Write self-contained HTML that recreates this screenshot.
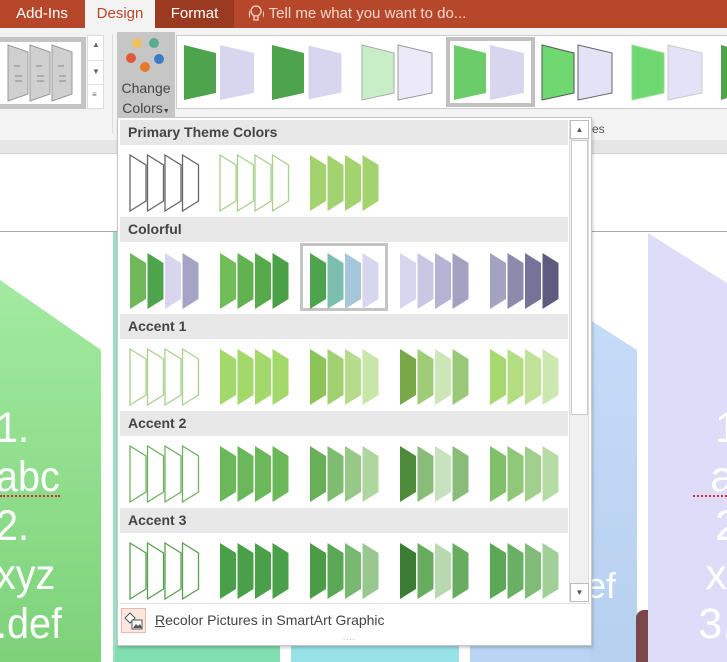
<!DOCTYPE html>
<html><head><meta charset="utf-8"><style>
*{margin:0;padding:0;box-sizing:border-box}
body{width:727px;height:662px;overflow:hidden;position:relative;background:#fff;font-family:"Liberation Sans",sans-serif}
.abs{position:absolute}
.tab{position:absolute;top:0;height:28px;line-height:28px;font-size:15px;color:#fff;text-align:center}
.hdr{position:absolute;left:120px;width:448px;height:25px;background:#e8e8e8;font-weight:bold;font-size:14px;color:#444;line-height:25px;padding-left:8px}
.big{position:absolute;color:#fff;font-size:43px;line-height:49px}
</style></head><body>
<!-- tab bar -->
<div class="abs" style="left:0;top:0;width:727px;height:28px;background:#b7472a"></div>
<div class="tab" style="left:0;width:84px">Add-Ins</div>
<div class="tab" style="left:85px;width:70px;background:#f3f3f3;color:#b7472a">Design</div>
<div class="tab" style="left:155px;width:79px;background:#9a3a20">Format</div>
<div class="tab" style="left:248px;width:240px;text-align:left;color:#f4d8cc">&#9711;&#xFE0E; Tell me what you want to do...</div>
<div class="abs" style="left:250px;top:6px;width:13px;height:16px;background:#b7472a"></div>
<svg class="abs" style="left:249px;top:5px" width="14" height="18"><circle cx="7" cy="6" r="5" fill="none" stroke="#f4d8cc" stroke-width="1.3"/><path d="M5 11v4h4v-4" fill="none" stroke="#f4d8cc" stroke-width="1.3"/></svg>
<!-- ribbon -->
<div class="abs" style="left:0;top:28px;width:727px;height:112px;background:#f3f3f3"></div>
<div class="abs" style="left:0;top:140px;width:727px;height:14px;background:#e6e6e6;border-bottom:1px solid #d0d0d0"></div>
<div class="abs" style="left:0;top:231px;width:727px;height:1px;background:#a8a8a8"></div>
<!-- left gallery -->
<div class="abs" style="left:0;top:37px;width:86px;height:72px;background:#c4c4c4"></div>
<div class="abs" style="left:0;top:42px;width:81px;height:62px;background:#fff"></div>
<svg class="abs" style="left:0;top:42px" width="82" height="62">
<g fill="#d0d0d0" stroke="#999">
<polygon points="8,3 28,10 28,52 8,59"/><polygon points="30,3 50,10 50,52 30,59"/><polygon points="52,3 72,10 72,52 52,59"/></g>
<g stroke="#888" stroke-width="1"><path d="M14 24h6M36 24h6M58 24h6M15 34h7M37 34h7M59 34h7M15 39h7M37 39h7M59 39h7"/></g></svg>
<div class="abs" style="left:87px;top:35px;width:17px;height:74px;background:#fff;border:1px solid #ddd"></div>
<div class="abs" style="left:87px;top:60px;width:17px;height:1px;background:#ddd"></div>
<div class="abs" style="left:87px;top:84px;width:17px;height:1px;background:#ddd"></div>
<div class="abs" style="left:92px;top:40px;font-size:8px;color:#666">&#9650;</div>
<div class="abs" style="left:92px;top:67px;font-size:8px;color:#666">&#9660;</div>
<div class="abs" style="left:92px;top:90px;font-size:8px;color:#666">&#8801;</div>
<div class="abs" style="left:112px;top:34px;width:1px;height:100px;background:#ddd"></div>
<!-- change colors -->
<div class="abs" style="left:117px;top:32px;width:58px;height:85px;background:#c6c6c6"></div>
<svg class="abs" style="left:117px;top:32px" width="58" height="50"><circle cx="20" cy="11" r="5" fill="#f0c060"/><circle cx="37" cy="11" r="5" fill="#5aab8e"/><circle cx="14" cy="26" r="5" fill="#e05a3a"/><circle cx="42" cy="27" r="5" fill="#3d7ac8"/><circle cx="28" cy="35" r="5" fill="#e87a2a"/></svg>
<div class="abs" style="left:117px;top:78px;width:58px;text-align:center;font-size:14px;color:#444;line-height:20px">Change<br>Colors<span style="font-size:7px">&#9660;</span></div>
<!-- right gallery -->
<div class="abs" style="left:176px;top:35px;width:560px;height:74px;background:#fff;border:1px solid #ccc"></div>
<div class="abs" style="left:446px;top:37px;width:89px;height:70px;background:#c0c0c0"></div>
<div class="abs" style="left:450px;top:41px;width:81px;height:62px;background:#fff"></div>
<svg class="abs" style="left:176px;top:35px" width="551" height="74">
<polygon points="8,10 40,18 40,58 8,65" fill="#4ea44c"/><polygon points="44,10 78,18 78,58 44,65" fill="#d8d6ee"/>
<polygon points="96,10 128,18 128,58 96,65" fill="#4ea44c"/><polygon points="132,10 166,18 166,58 132,65" fill="#d8d6ee" stroke="#fff"/>
<polygon points="186,10 218,18 218,58 186,65" fill="#c8eec8" stroke="#aaa"/><polygon points="222,10 256,18 256,58 222,65" fill="#eceaf8" stroke="#999"/>
<polygon points="278,10 310,18 310,58 278,65" fill="#6ccc6a"/><polygon points="314,10 348,18 348,58 314,65" fill="#d8d6ee"/>
<polygon points="366,10 398,18 398,58 366,65" fill="#70d870" stroke="#555"/><polygon points="402,10 436,18 436,58 402,65" fill="#e4e2f6" stroke="#666"/>
<polygon points="456,10 488,18 488,58 456,65" fill="#70d870" stroke="#9d9"/><polygon points="492,10 526,18 526,58 492,65" fill="#e4e2f6" stroke="#ccc"/>
<polygon points="545,10 560,14 560,60 545,65" fill="#4ea44c"/></svg>
<div class="abs" style="left:592px;top:122px;font-size:12px;color:#555">es</div>
<!-- slide background shapes -->
<div class="abs" style="left:0;top:280px;width:101px;height:382px;background:linear-gradient(#a2eaa0,#7ed27a);clip-path:polygon(0 0,100% 70px,100% 100%,0 100%)"></div>
<div class="big" style="left:-4px;top:404px;width:110px;transform:scaleX(0.92);transform-origin:0 0">1.<br>abc<br>2.<br>xyz<br>.def</div>
<div class="abs" style="left:0;top:495px;width:60px;height:2px;border-bottom:2px dotted #c33"></div>
<div class="abs" style="left:113px;top:232px;width:5px;height:430px;background:#9ee0c6"></div>
<div class="abs" style="left:115px;top:645px;width:165px;height:17px;background:#80deb0"></div>
<div class="abs" style="left:291px;top:645px;width:168px;height:17px;background:#96e2e6"></div>
<div class="abs" style="left:470px;top:645px;width:125px;height:17px;background:#bcd4f4"></div>
<div class="abs" style="left:590px;top:320px;width:47px;height:342px;background:linear-gradient(#c4dcf8,#b8d0f0);clip-path:polygon(0 0,100% 30px,100% 100%,0 100%)"></div>
<div class="abs" style="left:586px;top:565px;color:#fff;font-size:36px">ef</div>
<div class="abs" style="left:636px;top:610px;width:12px;height:52px;background:#7a4848;border-radius:8px 0 0 0"></div>
<div class="abs" style="left:648px;top:233px;width:79px;height:429px;background:#dedcf8;clip-path:polygon(0 0,100% 50px,100% 100%,0 100%)"></div>
<div class="big" style="left:677px;top:404px;width:100px;text-align:center;overflow:visible">1<br>al<br>2<br>xy<br>3.c</div>
<div class="abs" style="left:693px;top:495px;width:34px;border-bottom:2px dotted #c33"></div>
<!-- dropdown -->
<div class="abs" style="left:117px;top:117px;width:475px;height:529px;background:#fff;border:1px solid #c6c6c6;box-shadow:1px 2px 3px rgba(0,0,0,.2)"></div>
<div class="abs" style="left:569px;top:120px;width:20px;height:482px;background:#f0f0f0;border:1px solid #ddd"></div>
<div class="abs" style="left:571px;top:140px;width:17px;height:275px;background:#fff;border:1px solid #c8c8c8"></div>
<div class="abs" style="left:570px;top:120px;width:19px;height:19px;background:#fff;border:1px solid #bbb;font-size:8px;color:#555;text-align:center;line-height:18px">&#9650;</div>
<div class="abs" style="left:570px;top:583px;width:19px;height:19px;background:#fff;border:1px solid #bbb;font-size:8px;color:#555;text-align:center;line-height:18px">&#9660;</div>
<div class="hdr" style="top:120px">Primary Theme Colors</div>
<div class="hdr" style="top:217px">Colorful</div>
<div class="hdr" style="top:314px">Accent 1</div>
<div class="hdr" style="top:411px">Accent 2</div>
<div class="hdr" style="top:508px">Accent 3</div>
<div class="abs" style="left:300px;top:243px;width:88px;height:68px;border:3px solid #c4c4c4"></div>
<svg class="abs" style="left:0;top:0" width="727" height="662">
<defs><polygon id="t" points="0,0 16,10 16,46 0,56"/></defs>
<g transform="translate(130,155)" fill="#fff" stroke="#666" stroke-width="1.3"><use href="#t"/><use href="#t" x="17.5"/><use href="#t" x="35"/><use href="#t" x="52.5"/></g>
<g transform="translate(220,155)" fill="#fff" stroke="#a9d18e" stroke-width="1.3"><use href="#t"/><use href="#t" x="17.5"/><use href="#t" x="35"/><use href="#t" x="52.5"/></g>
<g transform="translate(310,155)" fill="#a3d36f"><use href="#t"/><use href="#t" x="17.5"/><use href="#t" x="35"/><use href="#t" x="52.5"/></g>

<g transform="translate(130,253)"><use href="#t" fill="#70b85a"/><use href="#t" x="17.5" fill="#4ea44c"/><use href="#t" x="35" fill="#d8d6ee"/><use href="#t" x="52.5" fill="#a6a4c4"/></g>
<g transform="translate(220,253)"><use href="#t" fill="#72bd5a"/><use href="#t" x="17.5" fill="#62b252"/><use href="#t" x="35" fill="#56aa4c"/><use href="#t" x="52.5" fill="#4aa046"/></g>
<g transform="translate(310,253)"><use href="#t" fill="#4ea44c"/><use href="#t" x="17.5" fill="#7cbfae"/><use href="#t" x="35" fill="#a6c6dc"/><use href="#t" x="52.5" fill="#d8d6ee"/></g>
<g transform="translate(400,253)"><use href="#t" fill="#d8d6ee"/><use href="#t" x="17.5" fill="#cac7e4"/><use href="#t" x="35" fill="#b6b2d4"/><use href="#t" x="52.5" fill="#a4a2c0"/></g>
<g transform="translate(490,253)"><use href="#t" fill="#a4a2c0"/><use href="#t" x="17.5" fill="#8e8aae"/><use href="#t" x="35" fill="#76729a"/><use href="#t" x="52.5" fill="#5e5a80"/></g>

<g transform="translate(130,349)" fill="#fff" stroke="#a9d18e" stroke-width="1.3"><use href="#t"/><use href="#t" x="17.5"/><use href="#t" x="35"/><use href="#t" x="52.5"/></g>
<g transform="translate(220,349)" fill="#a3d86a"><use href="#t"/><use href="#t" x="17.5"/><use href="#t" x="35"/><use href="#t" x="52.5"/></g>
<g transform="translate(310,349)"><use href="#t" fill="#8cc45a"/><use href="#t" x="17.5" fill="#a0d070"/><use href="#t" x="35" fill="#b4dc8c"/><use href="#t" x="52.5" fill="#c8e6a8"/></g>
<g transform="translate(400,349)"><use href="#t" fill="#78a848"/><use href="#t" x="17.5" fill="#a0cc78"/><use href="#t" x="35" fill="#cce6b8"/><use href="#t" x="52.5" fill="#98c878"/></g>
<g transform="translate(490,349)"><use href="#t" fill="#a8d870"/><use href="#t" x="17.5" fill="#b4dc80"/><use href="#t" x="35" fill="#c0e298"/><use href="#t" x="52.5" fill="#cce8b0"/></g>

<g transform="translate(130,446)" fill="#fff" stroke="#70b060" stroke-width="1.3"><use href="#t"/><use href="#t" x="17.5"/><use href="#t" x="35"/><use href="#t" x="52.5"/></g>
<g transform="translate(220,446)" fill="#6ab85a"><use href="#t"/><use href="#t" x="17.5"/><use href="#t" x="35"/><use href="#t" x="52.5"/></g>
<g transform="translate(310,446)"><use href="#t" fill="#68b058"/><use href="#t" x="17.5" fill="#80bc70"/><use href="#t" x="35" fill="#98c888"/><use href="#t" x="52.5" fill="#b0d6a0"/></g>
<g transform="translate(400,446)"><use href="#t" fill="#4e8c3c"/><use href="#t" x="17.5" fill="#88bc78"/><use href="#t" x="35" fill="#c8e2c0"/><use href="#t" x="52.5" fill="#88bc78"/></g>
<g transform="translate(490,446)"><use href="#t" fill="#80c068"/><use href="#t" x="17.5" fill="#90c87a"/><use href="#t" x="35" fill="#a0d08c"/><use href="#t" x="52.5" fill="#b4dca4"/></g>

<g transform="translate(130,543)" fill="#fff" stroke="#58a050" stroke-width="1.3"><use href="#t"/><use href="#t" x="17.5"/><use href="#t" x="35"/><use href="#t" x="52.5"/></g>
<g transform="translate(220,543)" fill="#4aa048"><use href="#t"/><use href="#t" x="17.5"/><use href="#t" x="35"/><use href="#t" x="52.5"/></g>
<g transform="translate(310,543)"><use href="#t" fill="#4a9c46"/><use href="#t" x="17.5" fill="#5aa856"/><use href="#t" x="35" fill="#78b870"/><use href="#t" x="52.5" fill="#98c890"/></g>
<g transform="translate(400,543)"><use href="#t" fill="#3a7c34"/><use href="#t" x="17.5" fill="#68ac60"/><use href="#t" x="35" fill="#b8d8b0"/><use href="#t" x="52.5" fill="#68ac60"/></g>
<g transform="translate(490,543)"><use href="#t" fill="#5aa856"/><use href="#t" x="17.5" fill="#6ab064"/><use href="#t" x="35" fill="#80bc78"/><use href="#t" x="52.5" fill="#a0d098"/></g>
</svg>
<div class="abs" style="left:119px;top:603px;width:471px;height:1px;background:#ddd"></div>
<div class="abs" style="left:121px;top:608px;width:25px;height:25px;background:#fbe6e0;border:1px solid #e8b8a8"></div>
<svg class="abs" style="left:121px;top:608px" width="25" height="25"><path d="M4 10l5-5 5 5-5 5z" fill="#fff" stroke="#555"/><rect x="11" y="12" width="10" height="9" fill="#fff" stroke="#555"/><path d="M12 20l3-4 2 2 2-2 2 4z" fill="#555"/></svg>
<div class="abs" style="left:155px;top:612px;font-size:14px;color:#444"><u>R</u>ecolor Pictures in SmartArt Graphic</div>
<div class="abs" style="left:343px;top:633px;font-size:8px;color:#999;letter-spacing:1px">....</div>
</body></html>
